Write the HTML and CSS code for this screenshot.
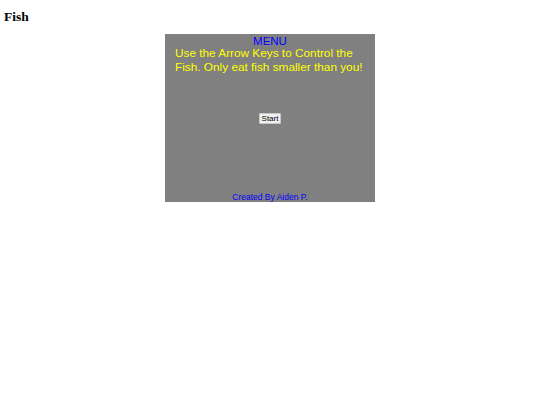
FILE: index.html
```html
<!DOCTYPE html>
<html>
<head>
<meta charset="utf-8">
<link rel="stylesheet" href="styles.css">
</head>
<body>
<h1 class="title">Fish</h1>
<div class="game">
  <div class="menu">MENU</div>
  <p class="info">Use the Arrow Keys to Control the Fish. Only eat fish smaller than you!</p>
  <div class="start-wrap"><button class="start">Start</button></div>
  <div class="credit">Created By Aiden P.</div>
</div>
</body>
</html>
```
FILE: styles.css
```css
html, body { margin: 0; padding: 0; background: #fff; }
body { padding: 4px 4px; }
.title {
  font-family: "Liberation Serif", serif;
  font-size: 13.5px;
  font-weight: bold;
  margin: 6px 0 0 0;
  line-height: 14px;
  color: #000;
}
.game {
  width: 210px;
  height: 168px;
  margin: 10px auto 0;
  background: #808080;
  box-sizing: border-box;
  display: flex;
  flex-direction: column;
  align-items: center;
  font-family: "Liberation Sans", Arial, sans-serif;
}
.menu {
  color: #0000ff;
  font-size: 11.5px;
  line-height: 12px;
  margin-top: 1px;
}
.info {
  color: #ffff00;
  font-size: 11.8px;
  line-height: 13.5px;
  margin: 0;
  padding: 0 2px 0 10px;
  align-self: stretch;
}
.start-wrap { margin-top: 33px; }
.start {
  font-family: "Liberation Sans", Arial, sans-serif;
  font-size: 8px;
  padding: 0 2px;
  height: 11px;
  background: #f0f0f0;
  border: 1px solid #c8c8c8;
  border-radius: 1px;
  color: #000;
  line-height: 9px;
}
.credit {
  margin-top: auto;
  margin-bottom: 0;
  color: #0000ff;
  font-size: 8.5px;
  line-height: 10px;
}
```
